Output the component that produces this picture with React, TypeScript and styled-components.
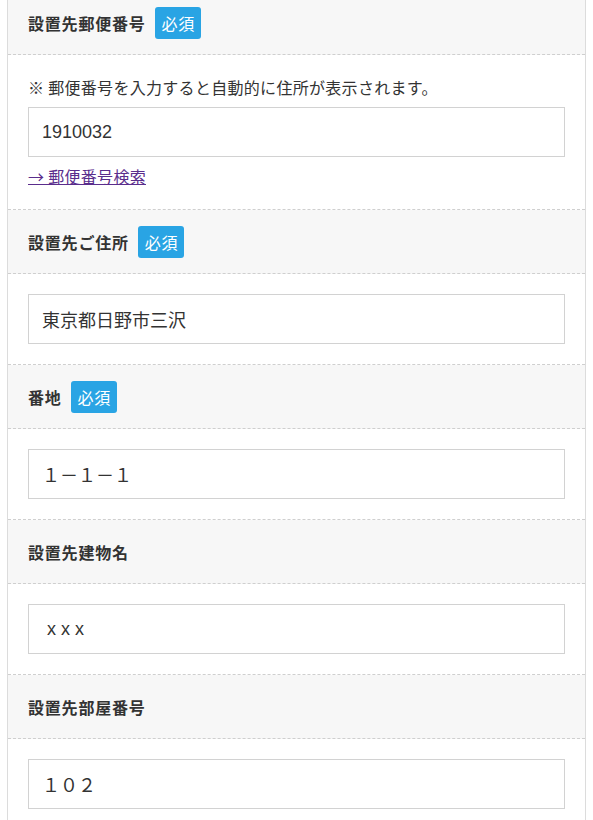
import React from "react";
import styled, { createGlobalStyle } from "styled-components";

const GlobalStyle = createGlobalStyle`
  html, body {
    margin: 0;
    padding: 0;
    background: #ffffff;
  }
  body {
    font-family: "Liberation Sans", "Noto Sans CJK JP", sans-serif;
    color: #333333;
    overflow: hidden;
  }
  * { box-sizing: border-box; }
`;

const Form = styled.div`
  margin: -9px 7px 0;
  border-left: 1px solid #dcdcdc;
  border-right: 1px solid #dcdcdc;
  background: #ffffff;
`;

const Heading = styled.div`
  display: flex;
  align-items: center;
  gap: 9px;
  height: 64px;
  padding: 0 20px;
  background: #f7f7f7;
  border-bottom: 1px dashed #cfcfcf;
`;

const Label = styled.span`
  font-family: "Noto Sans CJK JP", sans-serif;
  font-size: 16px;
  font-weight: 700;
  letter-spacing: 0.8px;
  color: #333333;
`;

const Badge = styled.span`
  display: inline-flex;
  align-items: center;
  height: 32px;
  padding: 0 6px 0 7px;
  border-radius: 3px;
  background: #29a4e4;
  color: #ffffff;
  font-family: "Noto Sans CJK JP", sans-serif;
  font-size: 16px;
  letter-spacing: 0.6px;
`;

const Body = styled.div`
  display: flex;
  flex-direction: column;
  padding: 20px 20px 20px;
  border-bottom: 1px dashed #cfcfcf;
`;

const Note = styled.p`
  margin: 0 0 8px;
  font-family: "Noto Sans CJK JP", sans-serif;
  font-size: 16px;
  letter-spacing: 0.3px;
  line-height: 24px;
  color: #333333;
`;

const Input = styled.input`
  display: block;
  width: 100%;
  height: 50px;
  margin: 0;
  padding: 0 13px;
  border: 1px solid #d2d2d2;
  border-radius: 0;
  background: #ffffff;
  font-family: "Liberation Sans", "Noto Sans CJK JP", sans-serif;
  font-size: 18px;
  color: #333333;
  outline: none;
`;

const SearchLink = styled.a`
  align-self: flex-start;
  margin-top: 6px;
  font-family: "Noto Sans CJK JP", sans-serif;
  font-size: 16px;
  letter-spacing: 0.3px;
  line-height: 26px;
  color: #5a2d8c;
  text-decoration: underline;
`;

type FieldProps = {
  label: string;
  required?: boolean;
  value: string;
  note?: string;
  link?: string;
};

const Field: React.FC<FieldProps> = ({ label, required, value, note, link }) => (
  <>
    <Heading>
      <Label>{label}</Label>
      {required && <Badge>必須</Badge>}
    </Heading>
    <Body>
      {note && <Note>{note}</Note>}
      <Input type="text" defaultValue={value} readOnly />
      {link && <SearchLink href="#">{link}</SearchLink>}
    </Body>
  </>
);

export default function App() {
  return (
    <>
      <GlobalStyle />
      <Form>
        <Field
          label="設置先郵便番号"
          required
          note="※ 郵便番号を入力すると自動的に住所が表示されます。"
          value="1910032"
          link="→ 郵便番号検索"
        />
        <Field label="設置先ご住所" required value="東京都日野市三沢" />
        <Field label="番地" required value="１－１－１" />
        <Field label="設置先建物名" value=" x x x" />
        <Field label="設置先部屋番号" value="１０２" />
      </Form>
    </>
  );
}
